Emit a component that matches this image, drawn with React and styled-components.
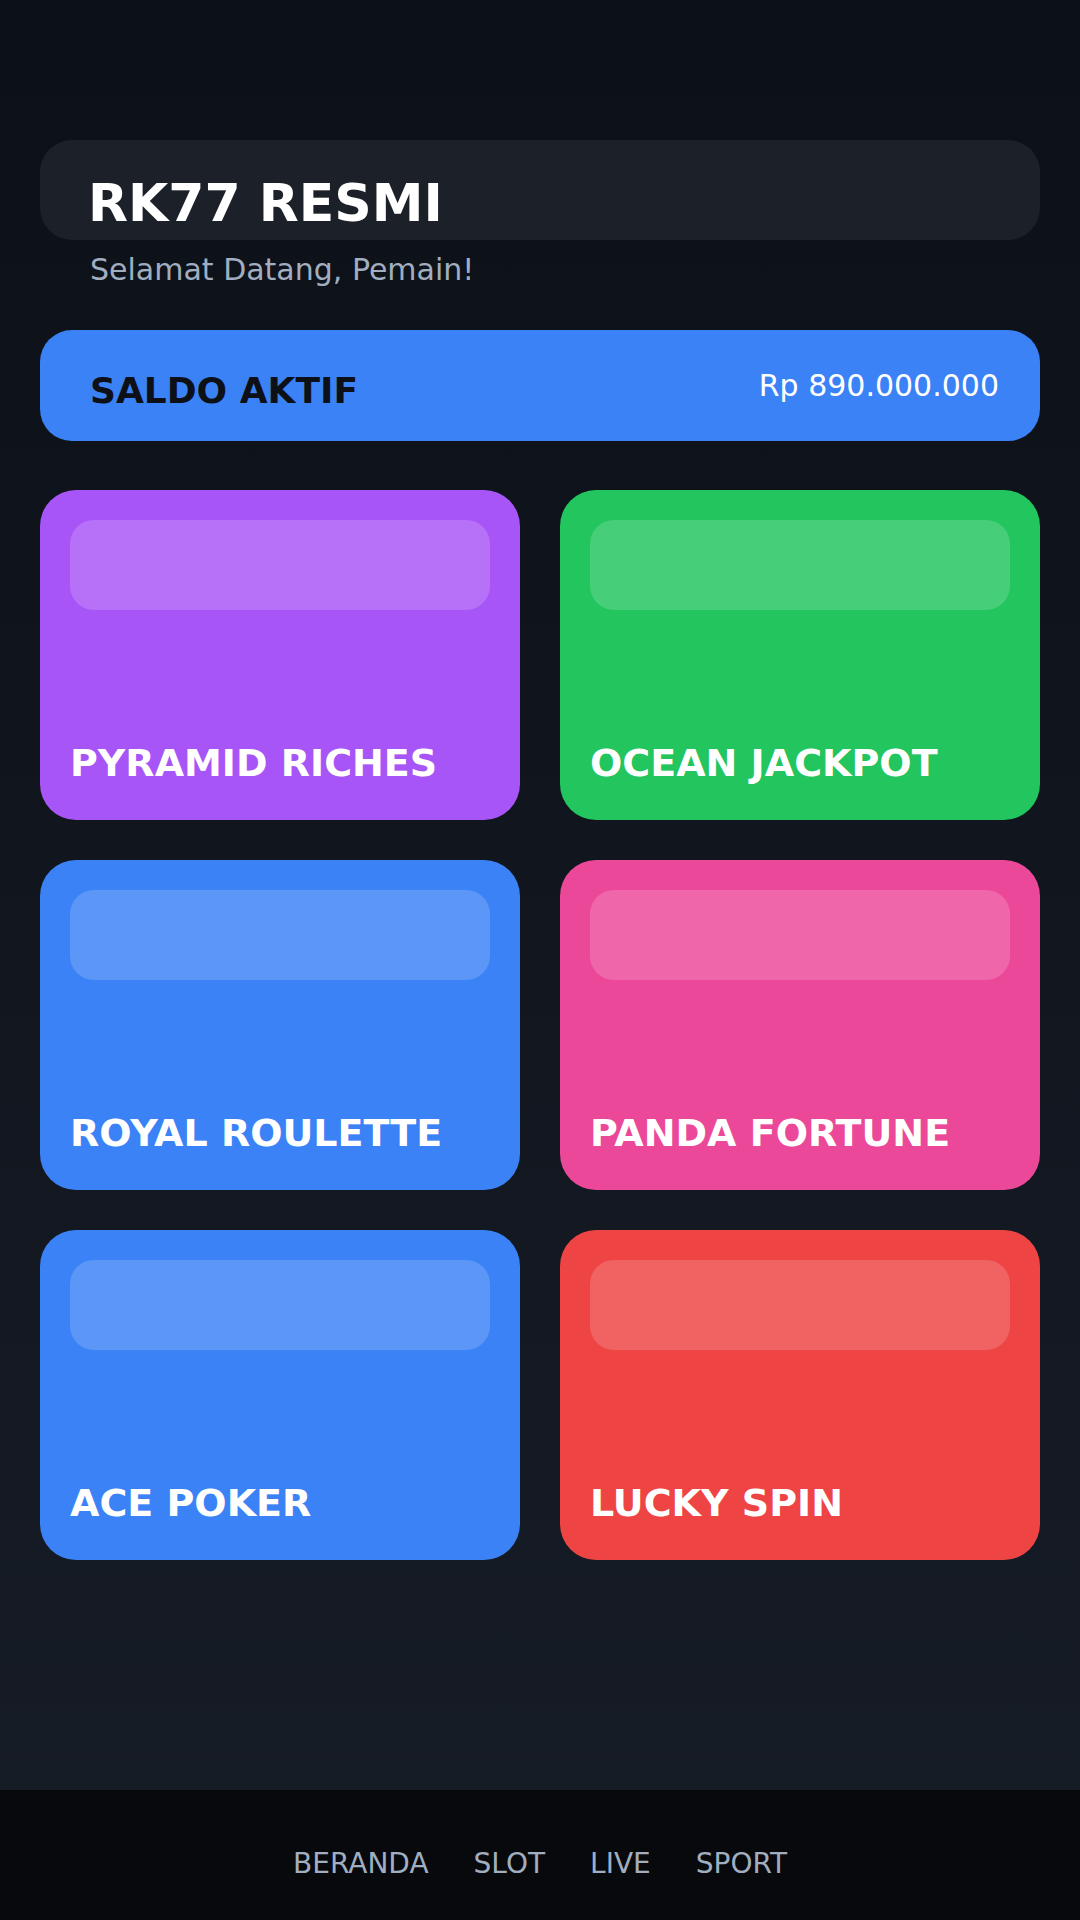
import React from "react";
import styled, { createGlobalStyle } from "styled-components";

const GlobalStyle = createGlobalStyle`
  html, body {
    margin: 0;
    padding: 0;
  }
  body {
    background: #0d1117;
    font-family: "DejaVu Sans", "Liberation Sans", sans-serif;
  }
  * {
    box-sizing: border-box;
  }
`;

const Page = styled.div`
  display: flex;
  flex-direction: column;
  min-height: 1920px;
  width: 1080px;
`;

const Main = styled.main`
  flex: 1;
  padding: 140px 40px 0;
  background: linear-gradient(180deg, #0c1017 0%, #161c26 100%);
`;

const HeaderCard = styled.header`
  height: 100px;
  padding: 33px 48px 0;
  background: #1c2028;
  border-radius: 32px;
`;

const Brand = styled.h1`
  margin: 0;
  font-size: 52px;
  font-weight: 700;
  line-height: normal;
  color: #ffffff;
`;

const Welcome = styled.p`
  margin: 12px 0 0;
  padding-left: 50px;
  font-size: 30px;
  line-height: normal;
  color: #a0aec0;
`;

const BalanceBar = styled.section`
  display: flex;
  align-items: center;
  justify-content: space-between;
  height: 111px;
  margin-top: 43px;
  padding: 0 41px 0 50px;
  background: #3b82f6;
  border-radius: 32px;
`;

const BalanceLabel = styled.span`
  padding-top: 9px;
  font-size: 36px;
  font-weight: 700;
  color: #0d1117;
`;

const BalanceValue = styled.span`
  font-size: 30px;
  color: #ffffff;
`;

const GameGrid = styled.div`
  display: grid;
  grid-template-columns: repeat(2, 480px);
  grid-auto-rows: 330px;
  gap: 40px;
  margin-top: 49px;
`;

const GameCard = styled.div`
  display: flex;
  flex-direction: column;
  justify-content: space-between;
  padding: 30px 30px 35px;
  background: ${(p) => p.color};
  border-radius: 36px;
`;

const Banner = styled.div`
  height: 90px;
  background: rgba(255, 255, 255, 0.17);
  border-radius: 24px;
`;

const GameName = styled.h2`
  margin: 0;
  font-size: 38px;
  font-weight: 700;
  line-height: normal;
  color: #ffffff;
`;

const BottomNav = styled.nav`
  display: flex;
  justify-content: center;
  align-items: flex-start;
  gap: 45px;
  height: 130px;
  padding-top: 57px;
  background: #07090c;
`;

const NavItem = styled.span`
  font-size: 28px;
  line-height: normal;
  color: #a0aec0;
`;

const games = [
  { name: "PYRAMID RICHES", color: "#a855f7" },
  { name: "OCEAN JACKPOT", color: "#22c55e" },
  { name: "ROYAL ROULETTE", color: "#3b82f6" },
  { name: "PANDA FORTUNE", color: "#ec4899" },
  { name: "ACE POKER", color: "#3b82f6" },
  { name: "LUCKY SPIN", color: "#ef4444" },
];

const navLinks = ["BERANDA", "SLOT", "LIVE", "SPORT"];

export default function App() {
  return (
    <Page>
      <GlobalStyle />
      <Main>
        <HeaderCard>
          <Brand>RK77 RESMI</Brand>
        </HeaderCard>
        <Welcome>Selamat Datang, Pemain!</Welcome>

        <BalanceBar>
          <BalanceLabel>SALDO AKTIF</BalanceLabel>
          <BalanceValue>Rp 890.000.000</BalanceValue>
        </BalanceBar>

        <GameGrid>
          {games.map((g) => (
            <GameCard key={g.name} color={g.color}>
              <Banner />
              <GameName>{g.name}</GameName>
            </GameCard>
          ))}
        </GameGrid>
      </Main>
      <BottomNav>
        {navLinks.map((l) => (
          <NavItem key={l}>{l}</NavItem>
        ))}
      </BottomNav>
    </Page>
  );
}
